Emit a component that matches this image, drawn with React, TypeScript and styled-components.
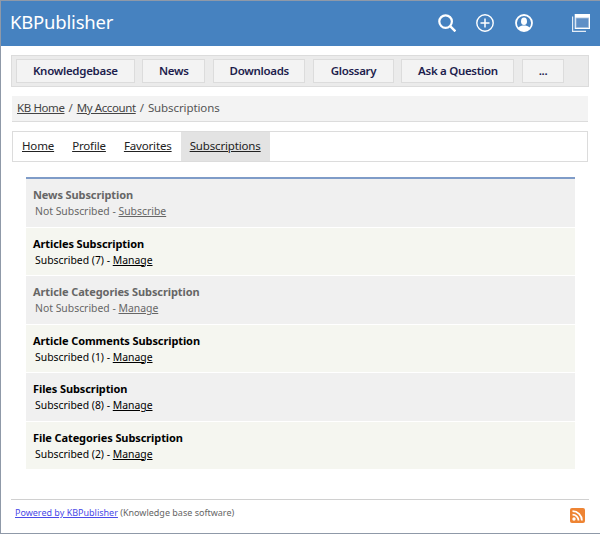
import { Fragment } from 'react';
import styled, { createGlobalStyle } from 'styled-components';

const GlobalStyle = createGlobalStyle`
  html, body {
    margin: 0;
    padding: 0;
    background: #fff;
  }
`;

const Page = styled.div`
  box-sizing: border-box;
  width: 600px;
  height: 534px;
  border: 1px solid #8f99a8;
  border-right: 0;
  font-family: 'Noto Sans', 'Open Sans', sans-serif;
  display: flex;
  flex-direction: column;
`;

const Header = styled.header`
  height: 45px;
  background: #4682c0;
  display: flex;
  align-items: center;
  padding: 0 10px 0 9px;
  flex-shrink: 0;
`;

const Logo = styled.div`
  flex: 1;
  color: #fff;
  font-size: 18.5px;
  letter-spacing: -0.2px;
  padding-bottom: 4px;
`;

const HeaderIcon = styled.svg<{ $gap?: number }>`
  display: block;
  width: 18px;
  height: 18px;
  margin-left: ${(p) => p.$gap ?? 20}px;
  margin-bottom: 1px;
  fill: none;
  stroke: #fff;
`;

const Nav = styled.nav`
  box-sizing: border-box;
  margin: 9px 11px 0 10px;
  height: 32px;
  background: #ebebeb;
  border: 1px solid #dcdcdc;
  padding: 3px 4px;
  display: flex;
  gap: 7.5px;
`;

const NavButton = styled.a<{ $width: number }>`
  box-sizing: border-box;
  width: ${(p) => p.$width}px;
  padding-bottom: 2px;
  background: #f3f3f3;
  border: 1px solid #dcdcdc;
  display: flex;
  align-items: center;
  justify-content: center;
  color: #1d1d4d;
  font-size: 11.5px;
  font-weight: 600;
  letter-spacing: -0.3px;
`;

const Breadcrumb = styled.div`
  box-sizing: border-box;
  margin: 9px 12px 0 11px;
  height: 26px;
  background: #f3f3f3;
  border-bottom: 1px solid #dcdcdc;
  padding: 0 5px 2px;
  display: flex;
  align-items: center;
  gap: 4px;
  font-size: 11.5px;
  letter-spacing: -0.1px;
  color: #555;
`;

const CrumbLink = styled.a`
  color: #444;
  letter-spacing: -0.4px;
  text-decoration: underline;
`;

const Tabs = styled.div`
  box-sizing: border-box;
  margin: 9px 12px 0 11px;
  height: 31px;
  border: 1px solid #dcdcdc;
  display: flex;
`;

const Tab = styled.a<{ $active?: boolean }>`
  padding: 0 9px 2px;
  display: flex;
  align-items: center;
  background: ${(p) => (p.$active ? '#e3e3e3' : 'transparent')};
  color: #222;
  font-size: 11.5px;
  letter-spacing: -0.15px;
  text-decoration: underline;
`;

const List = styled.div`
  margin: 15px 25px 0 25px;
  border-top: 2px solid #7f9cc8;
  display: flex;
  flex-direction: column;
  gap: 1px;
`;

const Row = styled.div<{ $off?: boolean; $alt?: boolean }>`
  box-sizing: border-box;
  height: 47.5px;
  padding: 8px 7px 0;
  background: ${(p) => (p.$alt ? '#f5f6f0' : '#f0f0f0')};
  color: ${(p) => (p.$off ? '#666' : '#000')};
`;

const RowTitle = styled.div`
  font-size: 11px;
  font-weight: 700;
  line-height: 15px;
  letter-spacing: -0.1px;
`;

const RowText = styled.div`
  margin: 1px 0 0 2px;
  font-size: 10.4px;
  line-height: 16px;
`;

const RowLink = styled.a`
  color: inherit;
  text-decoration: underline;
`;

const Footer = styled.footer`
  margin: 30px 11px 0 10px;
  border-top: 1px solid #d0d0d0;
  padding: 5px 4px 0;
  display: flex;
  justify-content: space-between;
  font-size: 9px;
  color: #666;
`;

const FooterText = styled.div`
  line-height: 16px;
`;

const PoweredLink = styled.a`
  color: #4a4ae8;
  text-decoration: underline;
`;

const Rss = styled.svg`
  display: block;
  width: 15px;
  height: 15px;
  margin-top: 3px;
`;

const navItems = [
  { label: 'Knowledgebase', width: 118.7 },
  { label: 'News', width: 63.3 },
  { label: 'Downloads', width: 92.5 },
  { label: 'Glossary', width: 81 },
  { label: 'Ask a Question', width: 113 },
  { label: '...', width: 42 },
];

const rows = [
  { title: 'News Subscription', status: 'Not Subscribed', link: 'Subscribe', off: true },
  { title: 'Articles Subscription', status: 'Subscribed (7)', link: 'Manage', alt: true },
  { title: 'Article Categories Subscription', status: 'Not Subscribed', link: 'Manage', off: true },
  { title: 'Article Comments Subscription', status: 'Subscribed (1)', link: 'Manage', alt: true },
  { title: 'Files Subscription', status: 'Subscribed (8)', link: 'Manage' },
  { title: 'File Categories Subscription', status: 'Subscribed (2)', link: 'Manage', alt: true },
];

const App = () => {
  return (
    <Fragment>
      <GlobalStyle />
      <Page>
        <Header>
          <Logo>KBPublisher</Logo>
          <HeaderIcon viewBox="0 0 18 18">
            <circle cx="7.6" cy="7.6" r="6.3" strokeWidth="2.2" />
            <path d="M12.2 12.2 L17.4 17.4" strokeWidth="2.4" />
          </HeaderIcon>
          <HeaderIcon viewBox="0 0 18 18">
            <circle cx="9" cy="9" r="8.2" strokeWidth="1.4" />
            <path d="M9 4.5 V13.5 M4.5 9 H13.5" strokeWidth="1.5" />
          </HeaderIcon>
          <HeaderIcon viewBox="0 0 18 18" $gap={21}>
            <circle cx="9" cy="9" r="8" strokeWidth="1.8" />
            <ellipse cx="9" cy="7.2" rx="3" ry="3.8" fill="#fff" stroke="none" />
            <path d="M3 14 C4.5 11.8 7 11.4 9 11.4 C11 11.4 13.5 11.8 15 14 C13.6 16 11.4 17 9 17 C6.6 17 4.4 16 3 14 Z" fill="#fff" stroke="none" />
          </HeaderIcon>
          <HeaderIcon viewBox="0 0 18 18" $gap={39}>
            <path fillRule="evenodd" d="M2.7 0 H18 V15 H2.7 Z M4 4 V13.5 H16.6 V4 Z" fill="#fff" stroke="none" />
            <rect x="4" y="4" width="12.6" height="9.5" fill="#5f8fc6" stroke="#a9c2e0" strokeWidth="0.8" />
            <path d="M0.6 2.5 V17.4 H14" strokeWidth="1.2" opacity="0.85" />
          </HeaderIcon>
        </Header>
        <Nav>
          {navItems.map((item) => (
            <NavButton key={item.label} $width={item.width}>
              {item.label}
            </NavButton>
          ))}
        </Nav>
        <Breadcrumb>
          <CrumbLink>KB Home</CrumbLink>
          <span>/</span>
          <CrumbLink>My Account</CrumbLink>
          <span>/</span>
          <span>Subscriptions</span>
        </Breadcrumb>
        <Tabs>
          <Tab>Home</Tab>
          <Tab>Profile</Tab>
          <Tab>Favorites</Tab>
          <Tab $active>Subscriptions</Tab>
        </Tabs>
        <List>
          {rows.map((row) => (
            <Row key={row.title} $off={row.off} $alt={row.alt}>
              <RowTitle>{row.title}</RowTitle>
              <RowText>
                {row.status} - <RowLink>{row.link}</RowLink>
              </RowText>
            </Row>
          ))}
        </List>
        <Footer>
          <FooterText>
            <PoweredLink>Powered by KBPublisher</PoweredLink> (Knowledge base software)
          </FooterText>
          <Rss viewBox="0 0 15 15">
            <rect x="0" y="0" width="15" height="15" rx="2" fill="#ee8433" />
            <circle cx="4" cy="11" r="1.7" fill="#fff" />
            <path d="M2.5 6.6 A6 6 0 0 1 8.5 12.6 M2.5 3.2 A9.4 9.4 0 0 1 11.9 12.6" fill="none" stroke="#fff" strokeWidth="1.8" />
          </Rss>
        </Footer>
      </Page>
    </Fragment>
  );
};

export default App;
